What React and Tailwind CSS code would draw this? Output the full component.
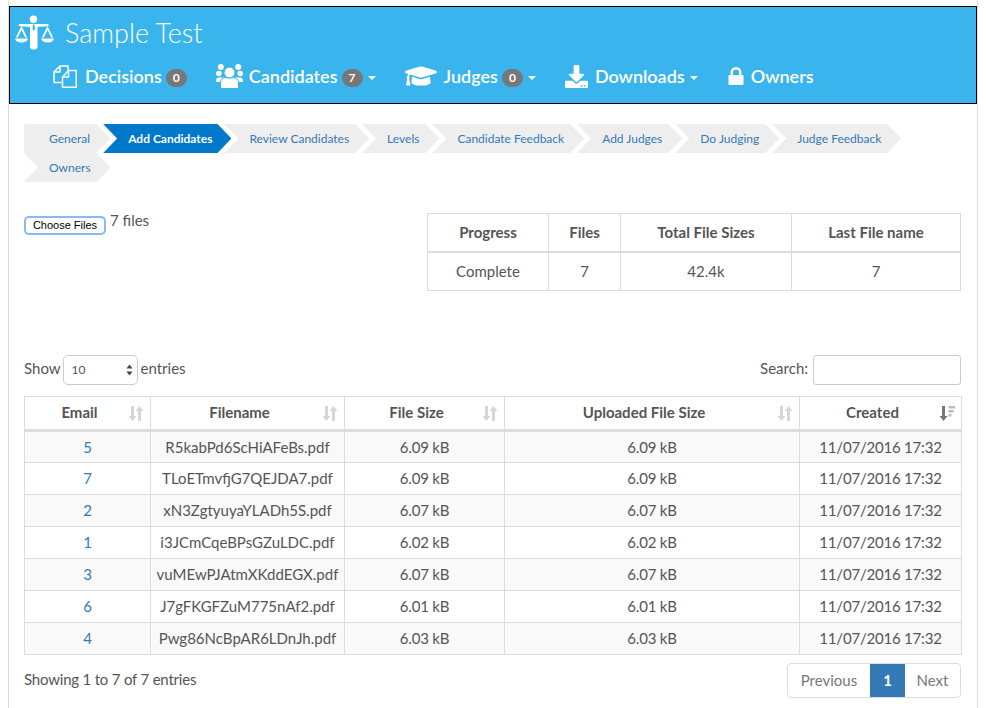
import { FaGraduationCap, FaDownload } from 'react-icons/fa'

const navBlue = '#3ab4ed'

function ScalesIcon() {
  return (
    <svg width="40" height="36" viewBox="0 0 40 36" fill="white" className="shrink-0">
      <circle cx="18.5" cy="4.3" r="3.7" />
      <path d="M4 9 H33 L34 11 L22.5 12 V33 Q18.5 36.5 15 33 V12 L3.5 11 Z" />
      <path d="M18 9.5 H19.5 L20 14 L18.8 16 L17.5 14 Z" fill={navBlue} />
      <path d="M6.5 11 L0.8 22.5 H2.8 L6.5 15 L10.2 22.5 H12.2 Z" />
      <path d="M32.5 11 L26.8 22.5 H28.8 L32.5 15 L36.2 22.5 H38.2 Z" />
      <path d="M0 23.5 H13 Q12 27.5 6.5 27.5 Q1 27.5 0 23.5 Z" />
      <path d="M26 23.5 H39 Q38 27.5 32.5 27.5 Q27 27.5 26 23.5 Z" />
    </svg>
  )
}

function FilesIcon() {
  return (
    <svg width="24" height="23" viewBox="0 0 24 23" fill="none" stroke="white" strokeWidth="1.5" strokeLinejoin="round" className="mr-[8px] shrink-0">
      <path d="M8.5 17.5 H1 V7 L7 1 H15 V5" />
      <path d="M7 1.5 V7 H1.5" />
      <path d="M9.5 12 L15.5 5.5 H23.2 V22.2 H9.5 Z" />
      <path d="M15.5 6 V12 H10" />
    </svg>
  )
}

function UsersIcon() {
  return (
    <svg width="27" height="25" viewBox="0 0 27 25" fill="white" className="mr-[6px] shrink-0">
      <circle cx="4.8" cy="3" r="3" />
      <circle cx="22.2" cy="3" r="3" />
      <circle cx="2.8" cy="9.5" r="2.8" />
      <circle cx="24.2" cy="9.5" r="2.8" />
      <path d="M0 17 Q0 13.5 3 13.5 H24 Q27 13.5 27 17 V18 H0 Z" />
      <circle cx="13.5" cy="8.5" r="5.4" stroke={navBlue} />
      <path d="M4.5 24.5 V19 Q4.5 14 10 13.5 Q13.5 15 17 13.5 Q22.5 14 22.5 19 V24.5 Z" stroke={navBlue} />
    </svg>
  )
}

function LockIcon() {
  return (
    <svg width="16" height="18" viewBox="0 0 16 18" fill="white" className="mr-[7px] shrink-0">
      <path d="M3.7 8.5 V5.5 a4.3 4.3 0 0 1 8.6 0 V8.5" fill="none" stroke="white" strokeWidth="2.4" />
      <rect x="0.5" y="8" width="15" height="10" rx="1" />
    </svg>
  )
}

function SortIcon({ active }) {
  if (active) {
    return (
      <svg width="16" height="15" viewBox="0 0 16 15" className="shrink-0">
        <path d="M3 0 H6 V10 H8.5 L4.5 15 L0.5 10 H3 Z" fill="#777" />
        <path d="M9.5 0 H16 V2.6 H9.5 Z M9.5 4 H14.5 V6.6 H9.5 Z M9.5 8 H12.5 V10.6 H9.5 Z" fill="#bbb" />
      </svg>
    )
  }
  return (
    <svg width="16" height="15" viewBox="0 0 16 15" fill="#d6d6d6" className="shrink-0">
      <path d="M3 0 H6 V10 H8.5 L4.5 15 L0.5 10 H3 Z" />
      <path d="M10 15 H13 V5 H15.5 L11.5 0 L7.5 5 H10 Z" />
    </svg>
  )
}

function Badge({ n }) {
  return (
    <span className="ml-[4px] mt-[3px] flex h-[18px] w-[21px] items-center justify-center rounded-full bg-[#777777] text-[12px] font-bold text-white">
      {n}
    </span>
  )
}

function Caret() {
  return <span className="ml-[5px] mt-[3px] h-0 w-0 border-x-[4px] border-t-[4px] border-x-transparent border-t-white" />
}

function NavItem({ icon, label, badge, caret, className }) {
  return (
    <div className={`flex items-center ${className}`}>
      {icon}
      <span className="text-[18px] font-semibold leading-[25px] text-white">{label}</span>
      {badge !== undefined && <Badge n={badge} />}
      {caret && <Caret />}
    </div>
  )
}

const steps = [
  { label: 'General', first: true },
  { label: 'Add Candidates', active: true },
  { label: 'Review Candidates' },
  { label: 'Levels' },
  { label: 'Candidate Feedback' },
  { label: 'Add Judges' },
  { label: 'Do Judging' },
  { label: 'Judge Feedback' },
  { label: 'Owners' },
]

function Step({ step }) {
  const shape = step.first
    ? '[clip-path:polygon(0_0,calc(100%-14px)_0,100%_50%,calc(100%-14px)_100%,0_100%)] rounded-l-[3px]'
    : '[clip-path:polygon(0_0,calc(100%-14px)_0,100%_50%,calc(100%-14px)_100%,0_100%,14px_50%)]'
  const colors = step.active ? 'bg-[#0078cc] pr-[19px] font-bold text-white' : 'bg-[#eeeeee] pr-[20px] text-[#337ab7]'
  return (
    <div className={`mr-[-7px] flex h-[29px] items-center pl-[25px] text-[12px] leading-[29px] ${shape} ${colors}`}>
      {step.label}
    </div>
  )
}

const rows = [
  ['5', 'R5kabPd6ScHiAFeBs.pdf', '6.09 kB'],
  ['7', 'TLoETmvfjG7QEJDA7.pdf', '6.09 kB'],
  ['2', 'xN3ZgtyuyaYLADh5S.pdf', '6.07 kB'],
  ['1', 'i3JCmCqeBPsGZuLDC.pdf', '6.02 kB'],
  ['3', 'vuMEwPJAtmXKddEGX.pdf', '6.07 kB'],
  ['6', 'J7gFKGFZuM775nAf2.pdf', '6.01 kB'],
  ['4', 'Pwg86NcBpAR6LDnJh.pdf', '6.03 kB'],
]

const columns = [
  { label: 'Email', width: 'w-[126px]' },
  { label: 'Filename', width: 'w-[194px]' },
  { label: 'File Size', width: 'w-[160px]' },
  { label: 'Uploaded File Size', width: 'w-[295px]' },
  { label: 'Created', width: 'w-[162px]', active: true },
]

export default function App() {
  return (
    <div className="h-[708px] overflow-hidden bg-white font-['Lato',sans-serif] text-[15px] text-[#555555]">
      <div className="ml-[8px] h-[708px] w-[970px] border-x border-[#dddddd] pt-[6px]">
        {/* Navbar */}
        <div className="h-[98px] border border-black bg-[#3ab4ed]">
          <div className="flex h-[50px] items-center pl-[5px] pt-[1px]">
            <ScalesIcon />
            <span className="ml-[10px] text-[27px] font-light leading-[36px] text-white">Sample Test</span>
          </div>
          <div className="mt-[3px] flex items-center">
            <NavItem className="ml-[43px]" label="Decisions" badge={0} icon={<FilesIcon />} />
            <NavItem className="ml-[29px]" label="Candidates" badge={7} caret icon={<UsersIcon />} />
            <NavItem className="ml-[29px]" label="Judges" badge={0} caret icon={<FaGraduationCap size={32} color="white" className="mr-[7px]" />} />
            <NavItem className="ml-[29px]" label="Downloads" caret icon={<FaDownload size={23} color="white" className="mr-[7px]" />} />
            <NavItem className="ml-[30px]" label="Owners" icon={<LockIcon />} />
          </div>
        </div>

        <div className="pl-[15px] pr-[16px] pt-[20px]">
          {/* Wizard steps */}
          <div className="flex flex-wrap">
            {steps.map((s) => (
              <Step key={s.label} step={s} />
            ))}
          </div>

          {/* Upload + progress */}
          <div className="mt-[31px] flex items-start justify-between">
            <div className="flex items-start pt-[5px]">
              <button className="ml-[2px] mr-[1px] h-[15px] w-[78px] rounded-[3px] bg-white font-['Liberation_Sans',sans-serif] text-[11px] leading-[15px] text-black shadow-[0_0_0_2px_#8ab8f0]">
                Choose Files
              </button>
              <span className="ml-[5px] mt-[-8px] leading-[20px]">7 files</span>
            </div>
            <table className="w-[533px] table-fixed border-collapse text-center">
              <thead>
                <tr className="h-[38px] font-bold">
                  <th className="w-[121px] border border-b-2 border-[#dddddd]">Progress</th>
                  <th className="w-[72px] border border-b-2 border-[#dddddd]">Files</th>
                  <th className="w-[171px] border border-b-2 border-[#dddddd]">Total File Sizes</th>
                  <th className="w-[169px] border border-b-2 border-[#dddddd]">Last File name</th>
                </tr>
              </thead>
              <tbody>
                <tr className="h-[39px]">
                  <td className="border border-[#dddddd]">Complete</td>
                  <td className="border border-[#dddddd]">7</td>
                  <td className="border border-[#dddddd]">42.4k</td>
                  <td className="border border-[#dddddd]">7</td>
                </tr>
              </tbody>
            </table>
          </div>

          {/* Length + search */}
          <div className="mt-[64px] flex h-[30px] items-center justify-between">
            <div className="flex items-center">
              <span className="mt-[-4px]">Show</span>
              <div className="ml-[2px] flex h-[30px] w-[75px] items-center justify-between rounded-[5px] border border-[#cccccc] pl-[8px] pr-[4px] text-[12px]">
                <span>10</span>
                <svg width="7" height="12" viewBox="0 0 7 12" fill="#444">
                  <path d="M3.5 0.5 L6.5 4.5 H0.5 Z M3.5 11.5 L0.5 7.5 H6.5 Z" />
                </svg>
              </div>
              <span className="ml-[3px] mt-[-4px]">entries</span>
            </div>
            <div className="flex items-center">
              <span className="mt-[-4px]">Search:</span>
              <div className="ml-[5px] h-[30px] w-[148px] rounded-[3px] border border-[#cccccc]" />
            </div>
          </div>

          {/* Data table */}
          <table className="mt-[11px] w-[937px] table-fixed border-collapse text-center">
            <thead>
              <tr className="h-[34px]">
                {columns.map((c) => (
                  <th key={c.label} className={`${c.width} border border-b-[3px] border-[#dddddd] px-[6px]`}>
                    <div className="flex items-center">
                      <span className="mt-[-2px] flex-1 font-bold">{c.label}</span>
                      <SortIcon active={c.active} />
                    </div>
                  </th>
                ))}
              </tr>
            </thead>
            <tbody>
              {rows.map((r, i) => (
                <tr key={r[0]} className={`h-[32px] ${i % 2 === 0 ? 'bg-[#f9f9f9]' : 'bg-white'}`}>
                  <td className="border border-[#dddddd] text-[#337ab7]">{r[0]}</td>
                  <td className="border border-[#dddddd]">{r[1]}</td>
                  <td className="border border-[#dddddd] tracking-[-0.2px]">{r[2]}</td>
                  <td className="border border-[#dddddd] tracking-[-0.2px]">{r[2]}</td>
                  <td className="border border-[#dddddd] tracking-[-0.2px]">11/07/2016 17:32</td>
                </tr>
              ))}
            </tbody>
          </table>

          {/* Footer */}
          <div className="mt-[8px] flex items-start justify-between">
            <span className="mt-[6px] leading-[20px] tracking-[-0.2px]">Showing 1 to 7 of 7 entries</span>
            <div className="flex h-[35px] items-stretch overflow-hidden rounded-[4px] border border-[#dddddd] text-[#777777]">
              <span className="flex w-[82px] items-center justify-center">Previous</span>
              <span className="flex w-[35px] items-center justify-center bg-[#337ab7] font-bold text-white">1</span>
              <span className="flex w-[55px] items-center justify-center">Next</span>
            </div>
          </div>
        </div>
      </div>
    </div>
  )
}
